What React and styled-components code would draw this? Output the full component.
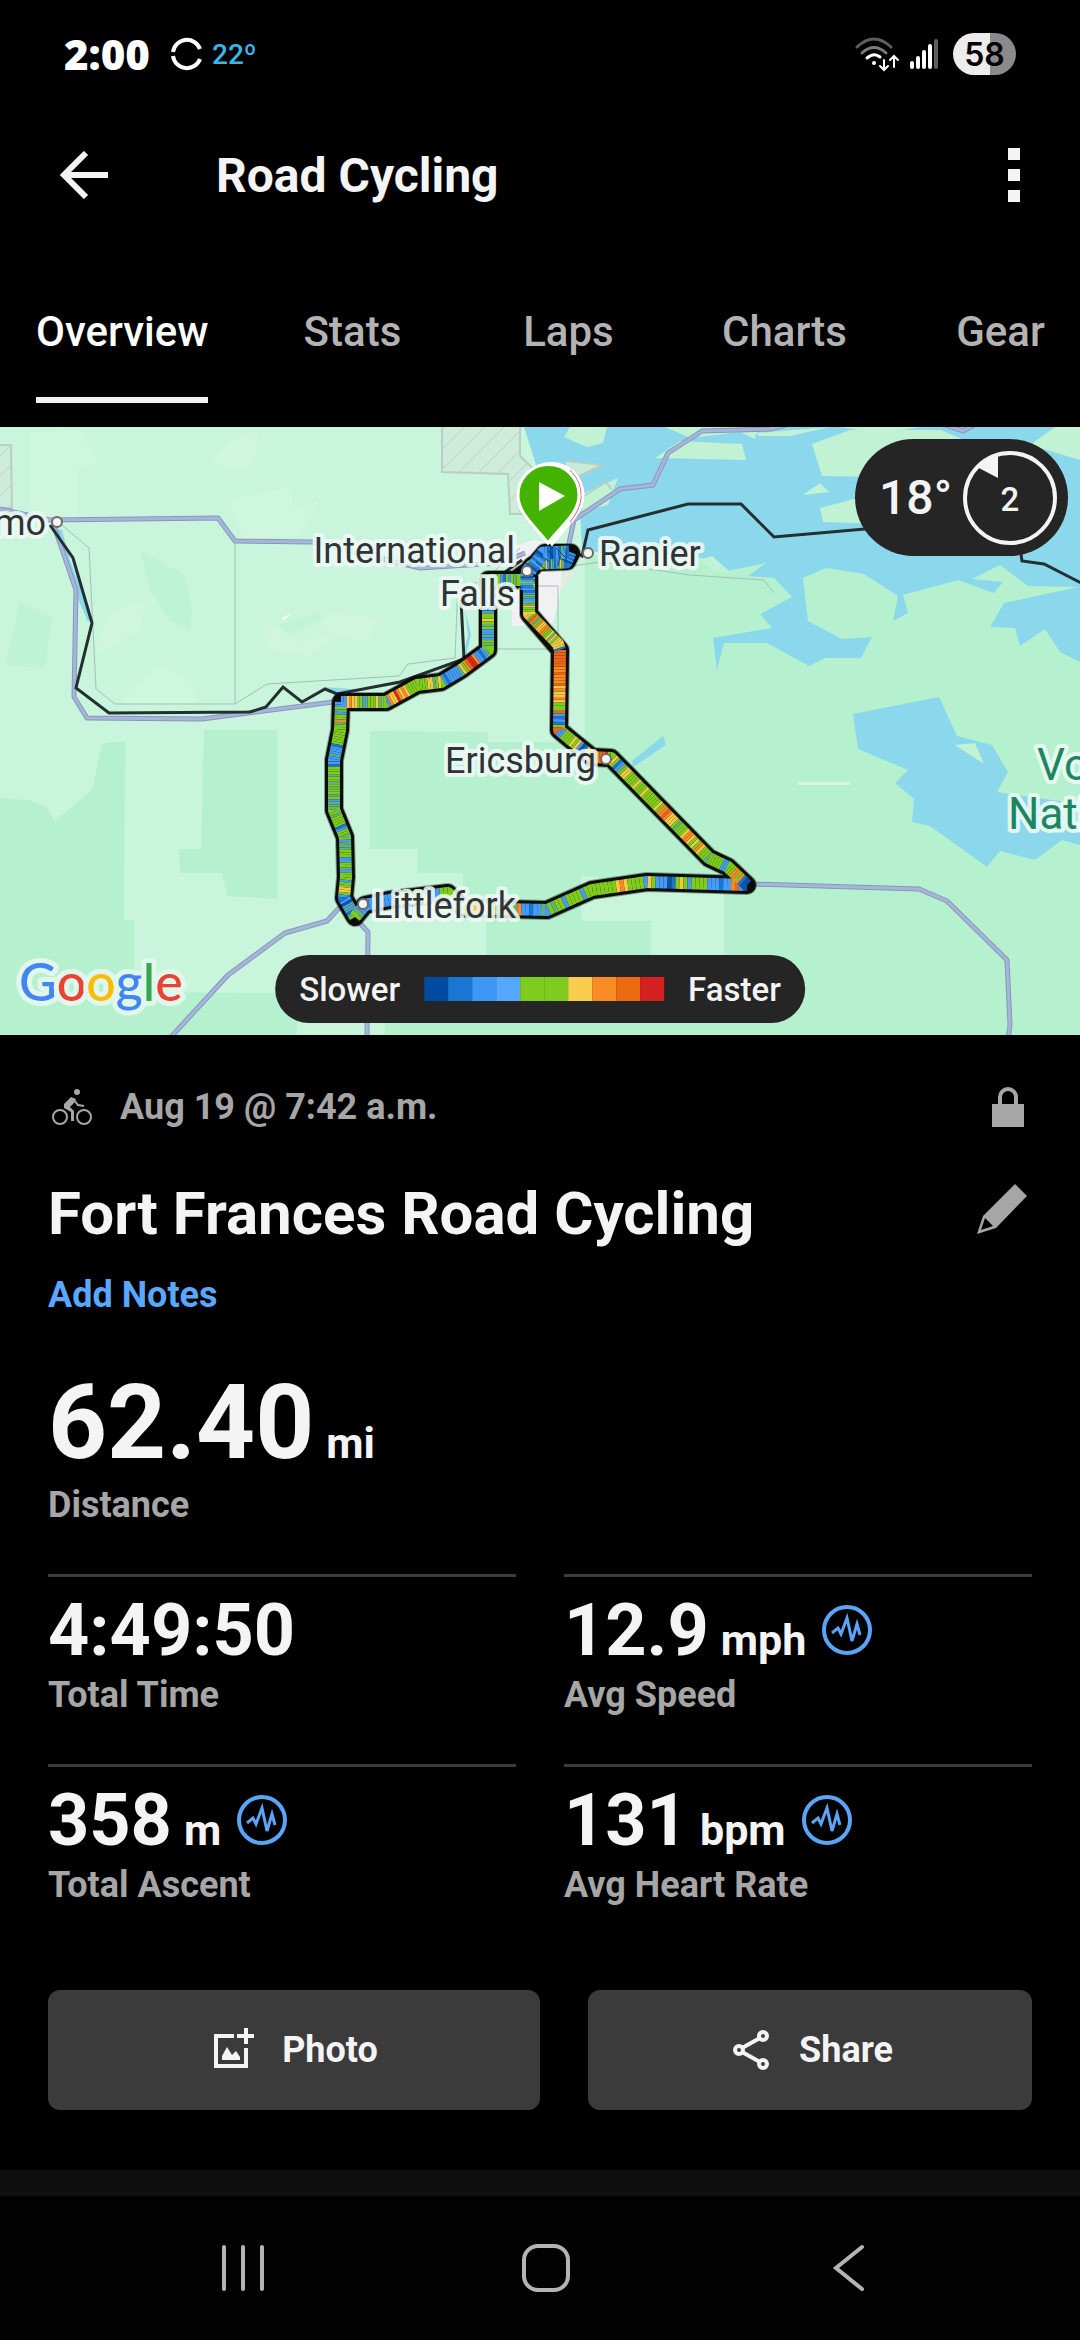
import { Fragment, useState } from "react";
import styled, { createGlobalStyle } from "styled-components";

const tabs = ["Overview", "Stats", "Laps", "Charts", "Gear"];

const stats = [
  { value: "4:49:50", label: "Total Time" },
  { value: "12.9", unit: "mph", label: "Avg Speed", chart: true },
  { value: "358", unit: "m", label: "Total Ascent", chart: true },
  { value: "131", unit: "bpm", label: "Avg Heart Rate", chart: true },
];

const legend = [
  "#004a9f",
  "#1976d2",
  "#3d97f5",
  "#55a7fd",
  "#80cc1e",
  "#80cc1e",
  "#f9cd4d",
  "#fa8c26",
  "#ec6a10",
  "#d32020",
];

/* ---------------- map data ---------------- */

const speed = {
  n: "#0d52ad",
  d: "#1976d2",
  b: "#459cf6",
  t: "#62b27c",
  g: "#80cc1e",
  y: "#f3c948",
  o: "#f98a26",
  e: "#e9661a",
  r: "#dc2a1c",
};

// every letter is one stretch of the leg, coloured by speed
const legs = [
  {
    d: "M527 580 H488 V650 L461 670 L441 682 L417 685 L386 702 L341 702",
    c: "dbggtgbgdbgtgbggggggbbbbgdbggygtgbbtbgtggtbdbborreogytbbbbbdbgygtyyggggggggyoyoryyobggtygggtbggyyoybb",
  },
  {
    d: "M341 702 L340 730 L334 760 V810 L345 837 L346 877 L344 898 L355 917",
    c: "bbgtbggotggggggggdbbbtbbbdgggtggtgtggtgbtttggtggggdbggtgbtttgggbbggtbgggbggyygbdbnbtbdtg",
  },
  {
    d: "M355 917 L365 905 L389 900 L448 893 L463 908 L547 910 L592 890 L647 882 L747 885",
    c: "gtbbbbbbbbbbgyoygggbbbbggggbgyggoyoeoygbyogtobbdbbtbgtggbggggbggggggggyoyggggbygbbbndgygbggggbbbdbboebn",
  },
  {
    d: "M747 885 L728 867 L709 858 L611 758 L592 757 L571 740 L559 730 L560 650",
    c: "nndogoogggbbgggggtgggyogygyooygggtgyyyoeoogyggggggygggyggggyygtbdgyggreeoeooyydnbygyggggbbegdbdbegggyoyyoyeoooeooeeeeee",
  },
  {
    d: "M560 650 L558 644 L529 614 V577",
    c: "dyyyygytyggooyyogtoegyyggyttbbgbdbgygdb",
  },
];

const tangle = [
  { d: "M527 590 V577 Q526 566 540 563 L566 562 L570 552", c: "bddbgbdnbdbtbdygoybgygtybdgbdbtygbdnbdbdb" },
  { d: "M530 571 L543 553 L569 552", c: "bndbdbdnbbdndbdtbd" },
];

const routeOutline =
  "M529 570 L515 580 H488 V650 L461 670 L441 682 L417 685 L386 702 L341 702 L340 730 L334 760 V810 L345 837 L346 877 L344 898 L355 917 L365 905 L389 900 L448 893 L463 908 L547 910 L592 890 L647 882 L747 885 L728 867 L709 858 L611 758 L592 757 L571 740 L559 730 L560 650 L529 614 V577 Q526 566 540 562 L567 561 L571 553 L545 553 L532 568";

const roads = [
  "M0 509 L50 520 L218 518 L235 541 L312 542 L420 568 L500 563 L525 553",
  "M54 526 L76 590 L74 697 L87 718 L202 719 L341 701",
  "M568 548 L574 520 L620 489 L653 485 L668 453 L702 431 L770 429 L790 424",
  "M940 423 L963 431 L978 423",
  "M750 884 L919 889 L947 901 L1007 960 L1010 1025 L1008 1040",
  "M340 907 L327 921 L285 933 L228 975 L170 1038",
  "M356 919 L368 932 L367 1040",
];

const thinRoads = [
  "M62 525 L89 548 L96 689 L115 704 H235 L267 684 L399 676 L408 664 L455 658 L458 583 L490 583",
  "M235 541 V704",
  "M490 575 L520 548",
  "M495 649 H558 V586 H535",
  "M572 566 L600 562 L690 575 L764 580 L774 593",
];

const rails = [
  "M50 525 L73 558 L92 623 L76 688 L109 713 L250 712 L266 707 L283 687 L302 702 L325 689 L337 694 L400 682 L464 659 L461 600",
  "M498 577 L522 560",
  "M573 551 L582 556 L588 530 L688 504 H741 L774 537 L865 529 L1000 520 L1021 554 L1022 561 L1044 564 L1085 585",
];

const towns = [
  [57, 522],
  [527, 571],
  [588, 553],
  [606, 759],
  [363, 904],
];

/* ---------------- drawings ---------------- */

const Leg = ({ d, c }) => (
  <g>
    {c.split("").map((k, i) => (
      <path
        key={i}
        d={d}
        pathLength={c.length}
        stroke={speed[k]}
        strokeDasharray={`1 ${c.length * 2}`}
        strokeDashoffset={-i}
      />
    ))}
  </g>
);

const RouteMap = () => (
  <MapSvg viewBox="0 427 1080 608" preserveAspectRatio="xMidYMid slice" role="img" aria-label="Route map">
    <defs>
      <pattern id="hatch" width="14" height="14" patternUnits="userSpaceOnUse" patternTransform="rotate(45)">
        <path d="M0 0V14" stroke="#bfd6c8" strokeWidth="2" />
      </pattern>
    </defs>
    <rect y="427" width="1080" height="608" fill="#c9f5dc" />

    {/* forest */}
    <g fill="#b5f1cf">
      <path d="M585 555H1080V1035H486V900H463V873H417L418 849H370V731L488 732V742L585 742Z" />
      <path d="M297 993H1080V1035H297Z" />
      <path d="M204 730H277V899L227 896L222 873H180L179 849H201Z" />
      <path d="M0 798L28 800L45 806L55 821L92 790L102 744L110 742H125L124 920H134V992L297 993V1035H0Z" />
      <path d="M20 602L52 617L45 668L5 665Z" opacity=".5" />
      <path d="M140 550L185 575L192 610L190 630L170 620L150 590Z" opacity=".5" />
      <path d="M278 625L320 612L330 635L300 642Z" opacity=".4" />
    </g>
    <g fill="#d6f7e2">
      <path d="M30 432L80 430L100 463L78 468V520L30 515Z" opacity=".5" />
      <path d="M230 442L258 431L255 460L243 471L210 463Z" opacity=".6" />
      <path d="M228 500L290 488L295 510L320 500L300 535L245 541Z" opacity=".5" />
      <path d="M110 612L145 600L140 630L97 655V640Z" opacity=".6" />
      <path d="M335 612L378 620L368 640L335 637L310 655L270 650L260 620L290 635Z" opacity=".6" />
      <path d="M130 690L160 665L190 680L200 704H120Z" opacity=".5" />
      <path d="M581 876L647 882L724 893V955H651V921H581Z" fill="#c9f5dc" />
      <path d="M297 993H385V1035H297Z" fill="#c9f5dc" />
      <path d="M798 782H850V785H798Z" />
      <path d="M282 618L292 613L284 620Z" fill="#fff" />
    </g>

    {/* water */}
    <g fill="#8bd8ed">
      <path d="M524 427L537 468L560 500L580 510L582 548L600 553L700 558L712 560L718 573L766 563L748 576L774 578L792 597L760 614L772 628L713 638L717 670L724 643H767L809 666L825 658H861L872 637L842 639L808 621L803 578L826 568L864 574L898 596L893 621L908 613L903 595L958 580L994 593L1003 582L972 579L1000 565L1028 586L1078 587L1004 603L990 627L1015 628L1020 646L1045 629L1060 652L1080 662V427Z" />
      <path d="M853 714L939 697L957 736L992 745L1008 772L997 792L1080 804V845L1062 840L1035 860L1000 851L987 867L930 826L912 822L914 799L895 783L908 770L858 749Z" />
      <path d="M632 761L663 736L666 745L633 767Z" />
      <path d="M62 530L70 560L92 618L88 622L70 580L54 528Z" />
      <path d="M325 687L365 690L338 694Z" />
      <path d="M465 610L471 635L466 655L464 652L468 635Z" />
    </g>
    <g fill="#c0f2d3">
      <path d="M665 427L690 438L740 432L755 439L756 433L770 427Z" />
      <path d="M755 433L830 427L790 436H760Z" />
      <path d="M680 441L742 444L746 460L655 458Z" />
      <path d="M812 444L850 430H940L960 438V478L822 476Z" />
      <path d="M840 427H920L880 434Z" />
      <path d="M803 495L820 483L829 492Z" />
      <path d="M820 508L865 496L880 524L823 522Z" />
      <path d="M940 427H1055L1030 445L1080 460V427Z" />
      <path d="M570 427L564 437L587 447L603 443L607 427Z" />
      <path d="M700 560L716 573L730 572L712 556Z" />
      <path d="M565 461L602 465L570 480Z" />
      <path d="M580 495L618 478L608 505L582 511Z" />
      <path d="M955 745L975 743L984 764Z" />
    </g>

    {/* reserves */}
    <g stroke="#bccdc4" strokeWidth="2" fill="#d0e6da" fillOpacity=".6">
      <path d="M442 425V472L508 474L510 514H540V475L520 456V425Z" />
      <path d="M-2 445H11L12 508H-2Z" />
      <path d="M565 461L602 465L575 478" />
      <path d="M584 496L606 482L612 490" fill="none" />
    </g>
    <path d="M442 427V472L508 474L510 514H540V475L520 456V427Z" fill="url(#hatch)" />
    <path d="M0 445H11L12 508H0Z" fill="url(#hatch)" />

    {/* town area */}
    <path d="M505 548L535 540L560 545L562 575L560 595L550 633L540 625L512 626V590Z" fill="#f1f1f3" />
    <path d="M565 570L574 574L560 590Z" fill="#ece8e2" />

    <g fill="none" strokeLinejoin="round">
      <g stroke="#a3bfb9" strokeWidth="1">
        {thinRoads.map((d) => (
          <path key={d} d={d} />
        ))}
      </g>
      {roads.map((d) => (
        <Fragment key={d}>
          <path d={d} stroke="#8796bf" strokeWidth="5" />
          <path d={d} stroke="#a6b6d7" strokeWidth="3" />
        </Fragment>
      ))}
      <g stroke="#252e30" strokeWidth="3" strokeLinejoin="miter">
        {rails.map((d) => (
          <path key={d} d={d} />
        ))}
      </g>

      {/* recorded track */}
      <path d={routeOutline} stroke="#000" strokeOpacity=".35" strokeWidth="20" strokeLinecap="round" />
      <path d={routeOutline} stroke="#0a0d08" strokeWidth="18" strokeLinecap="round" />
      <g strokeWidth="12">
        {legs.map((l) => (
          <Leg key={l.d} {...l} />
        ))}
      </g>
      <g strokeWidth="13">
        {tangle.map((l) => (
          <Leg key={l.d} {...l} />
        ))}
      </g>
      <path
        d="M541 556L550 562M556 548L566 558M548 550L554 558M566 549V563M536 562L546 570M558 566L560 556"
        stroke="#0b3f86"
        strokeWidth="1"
      />
    </g>

    {/* finish pin peeks out from behind the start pin */}
    <path
      d="M552 544C538 526 520 513 520 495A31 31 0 0 1 583 495C583 513 566 526 552 544Z"
      fill="#fff"
      stroke="#fff"
      strokeWidth="3"
    />
    <path d="M570 470Q582 482 581 498Q580 510 570 522" fill="none" stroke="#e4567a" strokeWidth="1" />
    <path
      d="M548 543C534 525 518 513 518 495A30 30 0 0 1 579 495C579 513 562 525 548 543Z"
      fill="#44b200"
      stroke="#fff"
      strokeWidth="3"
    />
    <path d="M539 482L565 496L539 511Z" fill="#fff" />

    <g fill="#f5f3f3" stroke="#6d6a6a" strokeWidth="2">
      {towns.map(([cx, cy]) => (
        <circle key={cx} cx={cx} cy={cy} r="5" />
      ))}
    </g>

    <PlaceName x="46" y="535" textAnchor="end">mo</PlaceName>
    <PlaceName x="515" y="563" textAnchor="end">International</PlaceName>
    <PlaceName x="515" y="606" textAnchor="end">Falls</PlaceName>
    <PlaceName x="599" y="566">Ranier</PlaceName>
    <PlaceName x="445" y="773">Ericsburg</PlaceName>
    <PlaceName x="373" y="918">Littlefork</PlaceName>
    <PlaceName x="1037" y="780" $park>Vo</PlaceName>
    <PlaceName x="1008" y="829" $park>Nati</PlaceName>

    <MapBrand x="19" y="1001">
      <tspan fill="#4285f4">G</tspan>
      <tspan fill="#ea4335">o</tspan>
      <tspan fill="#fbbc05">o</tspan>
      <tspan fill="#4285f4">g</tspan>
      <tspan fill="#34a853">l</tspan>
      <tspan fill="#ea4335">e</tspan>
    </MapBrand>
  </MapSvg>
);

const ChartBadge = () => (
  <svg width="50" height="50" viewBox="0 0 50 50" fill="none" stroke="#5aa5f8">
    <circle cx="25" cy="25" r="23" strokeWidth="4" />
    <path d="M10 28L16 23L19 29L25 13L30 36L35 19L38 30" strokeWidth="3" />
  </svg>
);

const BikeIcon = () => (
  <svg width="48" height="48" viewBox="0 0 48 48" fill="none" stroke="#a6a6a6">
    <circle cx="12" cy="34" r="7" strokeWidth="2" />
    <circle cx="36" cy="34" r="7" strokeWidth="2" />
    <circle cx="29" cy="9" r="3" fill="#a6a6a6" stroke="none" />
    <path d="M16 21L23 14L28 16L26 20L22 24L26 28V38H23V29L16 25Z" fill="#a6a6a6" stroke="none" />
    <path d="M26 17L30 22L36 23" strokeWidth="2" />
  </svg>
);

const LockIcon = () => (
  <svg width="48" height="48" viewBox="0 0 48 48">
    <path d="M16 23V14a8 8 0 0 1 16 0V23" fill="none" stroke="#a6a6a6" strokeWidth="4" />
    <path d="M8 21H40V44H8Z" fill="#a6a6a6" />
  </svg>
);

const PencilIcon = () => (
  <svg width="60" height="60" viewBox="0 0 60 60">
    <path d="M43 5L55 17L24 49L5 55L11 37Z" fill="#a6a6a6" />
    <path d="M13 39L21 47L9 51Z" fill="#000" />
  </svg>
);

const PhotoIcon = () => (
  <svg width="48" height="48" viewBox="0 0 48 48" fill="none" stroke="#f4f4f4" strokeWidth="4">
    <path d="M24 10H6V40H36V22" />
    <path d="M36 2V18M27 10H44" />
    <path d="M12 34V30L17 21L22 29L26 25L30 31V34Z" fill="#f4f4f4" stroke="none" />
  </svg>
);

const ShareIcon = () => (
  <svg width="48" height="48" viewBox="0 0 48 48" fill="none" stroke="#f4f4f4" strokeWidth="4">
    <circle cx="36" cy="10" r="4" />
    <circle cx="12" cy="24" r="4" />
    <circle cx="36" cy="38" r="4" />
    <path d="M15 22L33 12M15 26L33 36" />
  </svg>
);

/* ---------------- screen ---------------- */

const App = () => {
  const [active, setActive] = useState("Overview");

  return (
    <Screen>
      <GlobalStyle />
      <StatusBar>
        <Clock>2:00</Clock>
        <svg width="34" height="34" viewBox="0 0 34 34" fill="none" stroke="#fff" strokeWidth="4">
          <path d="M3 15A14 14 0 0 1 30 12M3 19A14 14 0 0 0 30 22" />
        </svg>
        <Temperature>22º</Temperature>
        <Spacer />
        <svg width="46" height="36" viewBox="0 0 46 36" fill="none" stroke="#fff" strokeWidth="3" strokeLinecap="round">
          <path d="M2 11Q19 -5 36 11" stroke="#5e5e5e" />
          <path d="M7 17Q19 6 31 17" stroke="#7a7a7a" />
          <path d="M12 22Q19 16 25 21" />
          <circle cx="19" cy="27" r="2" fill="#fff" stroke="none" />
          <path d="M29 24V33M25 30L29 34L33 30M39 31V21M35 24L39 20L43 24" strokeWidth="2" />
        </svg>
        <svg width="30" height="32" viewBox="0 0 30 32" stroke="#fff" strokeWidth="4" strokeLinecap="round">
          <path d="M3 25V29M9 20V29M15 14V29M21 8V29" />
          <path d="M27 3V29" stroke="#5e5e5e" />
        </svg>
        <Battery>58</Battery>
      </StatusBar>

      <TopBar>
        <IconButton aria-label="Back" $width={72}>
          <svg width="48" height="48" viewBox="0 0 48 48" fill="none" stroke="#f4f4f4" strokeWidth="6">
            <path d="M48 24H4M26 2L4 24L26 46" />
          </svg>
        </IconButton>
        <PageTitle>Road Cycling</PageTitle>
        <IconButton aria-label="More options" $width={36}>
          <svg width="12" height="54" viewBox="0 0 12 54" fill="#f4f4f4">
            <path d="M0 0H12V12H0ZM0 21H12V33H0ZM0 42H12V54H0Z" />
          </svg>
        </IconButton>
      </TopBar>

      <TabBar>
        {tabs.map((t) => (
          <Tab key={t} $active={t === active} onClick={() => setActive(t)}>
            <span>{t}</span>
          </Tab>
        ))}
      </TabBar>

      <MapPanel>
        <RouteMap />
        <Weather>
          18°
          <svg width="96" height="96" viewBox="0 0 96 96">
            <circle cx="48" cy="48" r="45" fill="none" stroke="#f4f4f4" strokeWidth="4" />
            <path d="M15 17Q24 7 36 4V28Z" fill="#f4f4f4" />
            <WindSpeed x="48" y="61" textAnchor="middle">2</WindSpeed>
          </svg>
        </Weather>
        <Legend>
          Slower
          <Swatches>
            {legend.map((c, i) => (
              <Swatch key={i} $color={c} />
            ))}
          </Swatches>
          Faster
        </Legend>
      </MapPanel>

      <Details>
        <MetaRow>
          <BikeIcon />
          <time>Aug 19 @ 7:42 a.m.</time>
          <Spacer />
          <LockIcon />
        </MetaRow>
        <NameRow>
          <h2>Fort Frances Road Cycling</h2>
          <IconButton aria-label="Edit name" $width={60}>
            <PencilIcon />
          </IconButton>
        </NameRow>
        <NotesLink href="#notes">Add Notes</NotesLink>

        <Distance>
          <Value $big>
            62.40<Unit>mi</Unit>
          </Value>
          <Label>Distance</Label>
        </Distance>

        <StatGrid>
          {stats.map((s) => (
            <Stat key={s.label}>
              <Value>
                {s.value}
                {s.unit && <Unit>{s.unit}</Unit>}
                {s.chart && <ChartBadge />}
              </Value>
              <Label>{s.label}</Label>
            </Stat>
          ))}
        </StatGrid>

        <Actions>
          <ActionButton>
            <PhotoIcon />
            Photo
          </ActionButton>
          <ActionButton>
            <ShareIcon />
            Share
          </ActionButton>
        </Actions>
      </Details>

      <Band />
      <NavBar>
        <NavButton aria-label="Recent apps">
          <svg width="48" height="48" viewBox="0 0 48 48" stroke="#b4b4b4" strokeWidth="4" strokeLinecap="round">
            <path d="M5 3V45M24 3V45M43 3V45" />
          </svg>
        </NavButton>
        <NavButton aria-label="Home">
          <svg width="48" height="48" viewBox="0 0 48 48" fill="none" stroke="#b4b4b4" strokeWidth="4">
            <rect x="2" y="2" width="44" height="44" rx="14" />
          </svg>
        </NavButton>
        <NavButton aria-label="Back">
          <svg width="48" height="48" viewBox="0 0 48 48" fill="none" stroke="#b4b4b4" strokeWidth="4" strokeLinecap="round">
            <path d="M37 3L11 24L37 45" />
          </svg>
        </NavButton>
      </NavBar>
    </Screen>
  );
};

const GlobalStyle = createGlobalStyle`
  * {
    box-sizing: border-box;
  }

  body {
    margin: 0;
    background-color: #000;
    font-family: Roboto, sans-serif;
    color: #f4f4f4;
  }

  button {
    border: none;
    padding: 0;
    background: none;
    font-family: inherit;
    color: inherit;
    cursor: pointer;
  }

  svg {
    flex-shrink: 0;
  }
`;

const Screen = styled.div`
  display: flex;
  flex-direction: column;
  min-height: 100vh;
`;

const Spacer = styled.div`
  flex: 1;
`;

const StatusBar = styled.div`
  display: flex;
  align-items: center;
  height: 108px;
  padding: 0 64px;
  gap: 8px;
`;

const Clock = styled.span`
  margin-right: 12px;
  font-family: "Open Sans", sans-serif;
  font-size: 42px;
  line-height: 48px;
  font-weight: 800;
  color: #fff;
`;

const Temperature = styled.span`
  font-size: 28px;
  font-weight: 500;
  color: #3fb5e6;
`;

const Battery = styled.span`
  display: flex;
  justify-content: center;
  align-items: center;
  width: 63px;
  height: 42px;
  margin-left: 6px;
  border-radius: 21px;
  background: linear-gradient(to right, #ececec 58%, #8a8a8a 58%);
  font-family: Inter, sans-serif;
  font-size: 32px;
  font-weight: 600;
  color: #000;
`;

const TopBar = styled.header`
  display: flex;
  align-items: center;
  height: 134px;
  padding: 0 48px;
`;

const IconButton = styled.button`
  display: flex;
  justify-content: center;
  align-items: center;
  flex-shrink: 0;
  width: ${({ $width }) => $width}px;
`;

const PageTitle = styled.h1`
  flex: 1;
  margin: 0 0 0 96px;
  font-size: 48px;
  font-weight: 700;
`;

const TabBar = styled.nav`
  display: flex;
  height: 185px;
  padding-bottom: 24px;
  overflow-x: auto;
  scrollbar-width: none;
`;

const Tab = styled.button`
  flex-shrink: 0;
  min-width: 216px;
  padding: 0 36px;
  font-size: 42px;
  font-weight: 500;
  color: ${({ $active }) => ($active ? "#fff" : "#b3b3b3")};

  span {
    display: flex;
    justify-content: center;
    align-items: center;
    height: 100%;
    padding-top: 24px;
    border-bottom: 6px solid ${({ $active }) => ($active ? "#f4f4f4" : "transparent")};
  }
`;

const MapPanel = styled.section`
  position: relative;
`;

const MapSvg = styled.svg`
  display: block;
  width: 100%;
  height: 608px;
`;

const PlaceName = styled.text`
  font-size: ${({ $park }) => ($park ? 44 : 36)}px;
  fill: ${({ $park }) => ($park ? "#1b8660" : "#303336")};
  stroke: #eefaf4;
  stroke-width: 8px;
  stroke-linejoin: round;
  stroke-opacity: 0.9;
  paint-order: stroke;
`;

const MapBrand = styled.text`
  font-family: Lato, sans-serif;
  font-size: 52px;
  font-weight: 500;
  stroke: #e2f7ec;
  stroke-width: 10px;
  stroke-linejoin: round;
  paint-order: stroke;
`;

const Weather = styled.div`
  position: absolute;
  top: 12px;
  right: 12px;
  display: flex;
  align-items: center;
  gap: 10px;
  height: 117px;
  padding: 0 10px 0 24px;
  border-radius: 59px;
  background-color: #252525;
  font-size: 48px;
  font-weight: 500;
`;

const WindSpeed = styled.text`
  font-size: 33px;
  font-weight: 500;
  fill: #f4f4f4;
`;

const Legend = styled.div`
  position: absolute;
  bottom: 12px;
  left: 50%;
  transform: translateX(-50%);
  display: flex;
  align-items: center;
  gap: 24px;
  height: 68px;
  padding: 0 24px;
  border-radius: 34px;
  background-color: #252525;
  font-size: 33px;
  font-weight: 500;
`;

const Swatches = styled.div`
  display: flex;
`;

const Swatch = styled.div`
  width: 24px;
  height: 24px;
  background-color: ${({ $color }) => $color};
`;

const Details = styled.main`
  padding: 36px 48px 60px;
`;

const MetaRow = styled.div`
  display: flex;
  align-items: center;
  height: 72px;
  font-size: 36px;
  font-weight: 700;
  color: #a6a6a6;

  time {
    margin-left: 24px;
  }
`;

const NameRow = styled.div`
  display: flex;
  justify-content: space-between;
  align-items: flex-start;
  margin-top: 36px;

  h2 {
    margin: 0;
    font-size: 60px;
    line-height: 70px;
    font-weight: 700;
  }
`;

const NotesLink = styled.a`
  display: block;
  margin-top: 22px;
  font-size: 36px;
  line-height: 48px;
  font-weight: 700;
  color: #5aa7ff;
  text-decoration: none;
`;

const Distance = styled.div`
  margin: 42px 0 45px;
`;

const Value = styled.div`
  display: flex;
  align-items: baseline;
  height: ${({ $big }) => ($big ? 120 : 82)}px;
  font-size: ${({ $big }) => ($big ? 103 : 72)}px;
  line-height: ${({ $big }) => ($big ? 124 : 84)}px;
  font-weight: 700;

  svg {
    margin-left: 16px;
  }
`;

const Unit = styled.span`
  margin-left: 12px;
  font-size: 43px;
`;

const Label = styled.div`
  font-size: 36px;
  line-height: 48px;
  font-weight: 700;
  color: #a6a6a6;
`;

const StatGrid = styled.div`
  display: grid;
  grid-template-columns: 1fr 1fr;
  gap: 45px 48px;
`;

const Stat = styled.div`
  padding-top: 12px;
  border-top: 3px solid #3b3b3b;
`;

const Actions = styled.div`
  display: grid;
  grid-template-columns: 41fr 37fr;
  gap: 48px;
  margin-top: 81px;
`;

const ActionButton = styled.button`
  display: flex;
  justify-content: center;
  align-items: center;
  gap: 24px;
  height: 120px;
  border-radius: 12px;
  background-color: #3b3b3b;
  font-size: 36px;
  font-weight: 700;
`;

const Band = styled.div`
  height: 26px;
  background-color: #0f0f0f;
`;

const NavBar = styled.footer`
  display: flex;
  flex: 1;
  min-height: 144px;
  padding: 0 80px 0 92px;
  background-color: #020202;
`;

const NavButton = styled.button`
  display: flex;
  flex: 1;
  justify-content: center;
  align-items: center;
`;

export default App;
